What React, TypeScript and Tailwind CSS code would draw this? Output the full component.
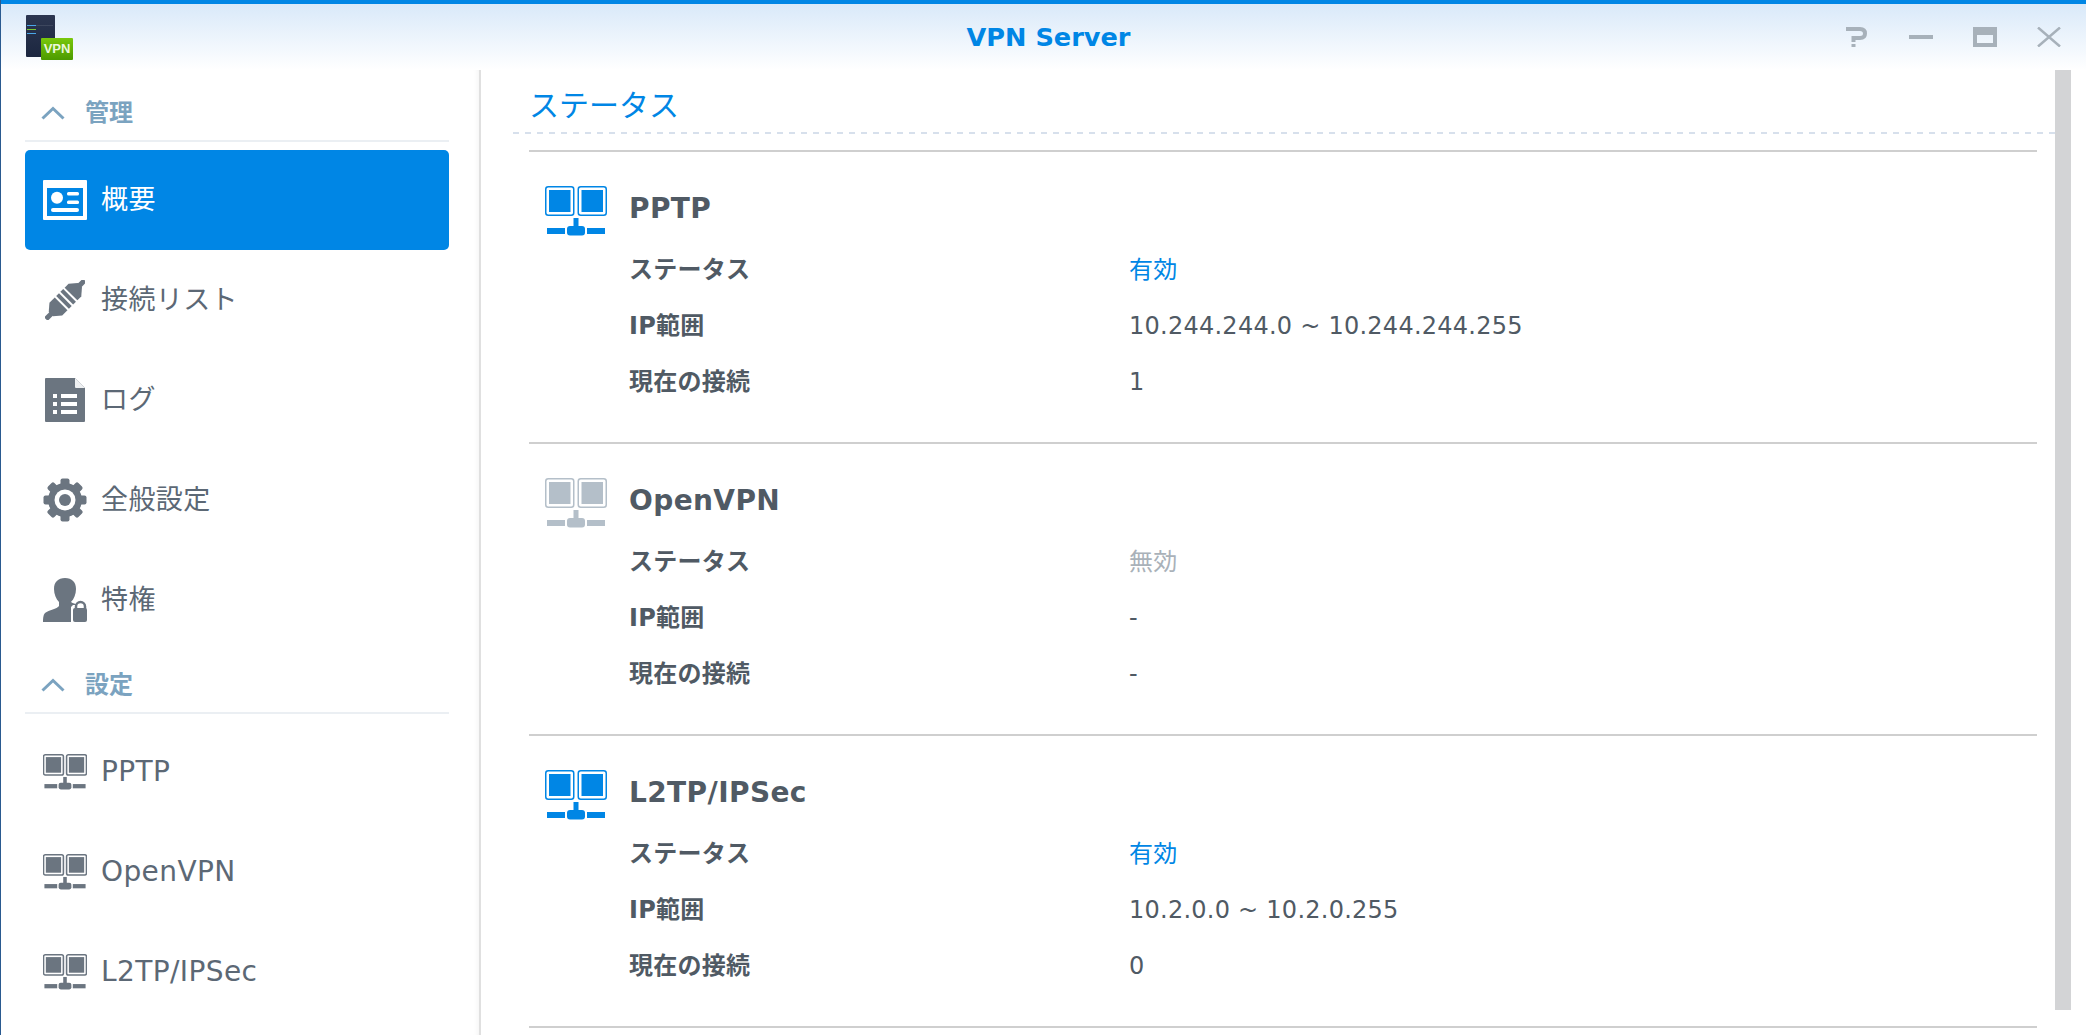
const FONT = "font-['DejaVu_Sans','Noto_Sans_CJK_JP',sans-serif]";

const NetworkIcon = ({
  color,
  className,
  stroke = 1.5,
}: {
  color: string;
  className: string;
  stroke?: number;
}) => (
  <svg viewBox="0 0 62 50" className={className}>
    <rect x="0.75" y="0.75" width="28" height="28.5" rx="2.5" fill="none" stroke={color} strokeWidth={stroke} />
    <rect x="33.25" y="0.75" width="28" height="28.5" rx="2.5" fill="none" stroke={color} strokeWidth={stroke} />
    <rect x="4" y="4" width="21.5" height="22" fill={color} />
    <rect x="36.5" y="4" width="21.5" height="22" fill={color} />
    <rect x="28.5" y="32" width="5" height="10" fill={color} />
    <rect x="22" y="40" width="18" height="9.5" rx="3" fill={color} />
    <rect x="2" y="42" width="18" height="6" fill={color} />
    <rect x="42" y="42" width="18" height="6" fill={color} />
  </svg>
);

const OverviewIcon = () => (
  <svg viewBox="0 0 44 40" className="w-[44px] h-[40px]">
    <path fillRule="evenodd" fill="#fff" d="M1 0H43a1 1 0 0 1 1 1V39a1 1 0 0 1-1 1H1a1 1 0 0 1-1-1V1a1 1 0 0 1 1-1ZM4 8V36H40V8Z" />
    <circle cx="14" cy="17.7" r="6" fill="#fff" />
    <rect x="24" y="12" width="12" height="3.5" rx="1.5" fill="#fff" />
    <rect x="24" y="20.5" width="12" height="3.5" rx="1.5" fill="#fff" />
    <rect x="8" y="28" width="28" height="4" rx="2" fill="#fff" />
  </svg>
);

const PlugIcon = () => (
  <svg viewBox="0 0 40 40" className="w-[40px] h-[40px]">
    <g transform="translate(20 20) rotate(45)" fill="#6b7580">
      <rect x="-2.5" y="-28" width="5" height="8" />
      <path d="M-3-21H3L9-14V-8.5H-9V-14Z" />
      <rect x="-9" y="-6.5" width="18" height="4" />
      <rect x="-9" y="-0.5" width="18" height="4" />
      <path d="M-9 5.5H9V13L3 20H-3L-9 13Z" />
      <rect x="-2.5" y="19" width="5" height="8" />
    </g>
  </svg>
);

const LogIcon = () => (
  <svg viewBox="0 0 40 44" className="w-[40px] h-[44px]">
    <path d="M1 0H30L40 10V43a1 1 0 0 1-1 1H1a1 1 0 0 1-1-1V1a1 1 0 0 1 1-1Z" fill="#6b7580" />
    <path d="M30 0L40 10H31a1 1 0 0 1-1-1Z" fill="#eef0f2" />
    {[16, 24, 32].map((y) => (
      <g key={y} fill="#fff">
        <rect x="8" y={y} width="4" height="4" />
        <rect x="16" y={y} width="16" height="4" />
      </g>
    ))}
  </svg>
);

const GearIcon = () => (
  <svg viewBox="0 0 44 44" className="w-[44px] h-[44px]">
    <g fill="#6b7580">
      <circle cx="22" cy="22" r="17" />
      {[0, 45, 90, 135, 180, 225, 270, 315].map((a) => (
        <rect key={a} x="17.5" y="0.5" width="9" height="9" rx="2" transform={`rotate(${a} 22 22)`} />
      ))}
    </g>
    <circle cx="22" cy="22" r="10.5" fill="#fff" />
    <circle cx="22" cy="22" r="6" fill="#6b7580" />
  </svg>
);

const UserLockIcon = () => (
  <svg viewBox="0 0 44 44" className="w-[44px] h-[44px]">
    <path d="M22 0C15 0 11 4 11 11C11 16 13 21 16 24V28C14 31 6 32 2 35C0 37 0 41 0 44H28V35L33 27C33 25 30 26 28 24C31 21 33 16 33 11C33 4 29 0 22 0Z" fill="#6b7580" />
    <path d="M30 27H44V44H28V29Z" fill="#fff" />
    <path d="M33 31V28.5a4.5 4.5 0 0 1 9 0V31" fill="none" stroke="#6b7580" strokeWidth="2.5" />
    <rect x="30" y="30" width="14" height="14" rx="2" fill="#6b7580" />
  </svg>
);

const Chevron = () => (
  <svg viewBox="0 0 24 14" className="w-[24px] h-[14px]">
    <path d="M1.5 12.5L12 2.5L22.5 12.5" fill="none" stroke="#7ba3c0" strokeWidth="3" />
  </svg>
);

const SectionHeader = ({ label }: { label: string }) => (
  <div className="flex items-center h-[64px] pt-[8px] border-b-2 border-[#ebeff3] pl-[16px] shrink-0">
    <Chevron />
    <span className="ml-[20px] text-[24px] font-bold text-[#7ba3c0]">{label}</span>
  </div>
);

const NavItem = ({
  label,
  icon,
  active = false,
  latin = false,
}: {
  label: string;
  icon: React.ReactNode;
  active?: boolean;
  latin?: boolean;
}) => (
  <div
    className={`flex items-center h-[100px] pl-[18px] rounded-[5px] shrink-0 ${
      active ? "bg-[#0086e5] text-white" : "text-[#5c6875]"
    }`}
  >
    <div className="w-[44px] flex justify-center shrink-0">{icon}</div>
    <span className={`ml-[14px] ${latin ? "text-[28px] tracking-[0.4px]" : "text-[27px] tracking-[0.4px]"}`}>
      {label}
    </span>
  </div>
);

const VpnSection = ({
  name,
  status,
  range,
  connections,
  enabled,
}: {
  name: string;
  status: string;
  range: string;
  connections: string;
  enabled: boolean;
}) => (
  <section className="h-[292px] border-t-2 border-[#cfcfcf] pt-[34px] pl-[16px]">
    <div className="flex items-center h-[50px]">
      <NetworkIcon color={enabled ? "#0086e5" : "#b4bfc9"} className="w-[62px] h-[50px]" />
      <h2 className="ml-[22px] mb-[5px] text-[28px] font-bold tracking-[0.4px] text-[#505a64]">{name}</h2>
    </div>
    <div className="mt-[6px] ml-[84px] grid grid-cols-[500px_1fr] auto-rows-[56px] items-center text-[24px] tracking-[0.25px] text-[#505a64]">
      <span className="font-bold">ステータス</span>
      <span className={enabled ? "text-[#0086e5]" : "text-[#a9b1b9]"}>{status}</span>
      <span className="font-bold">IP範囲</span>
      <span>{range}</span>
      <span className="font-bold">現在の接続</span>
      <span>{connections}</span>
    </div>
  </section>
);

export default function App() {
  return (
    <div className={`h-[1035px] overflow-hidden bg-white border-l border-[#2a5a90] flex flex-col ${FONT}`}>
      <header className="h-[70px] shrink-0 border-t-4 border-[#0086e5] bg-gradient-to-b from-[#d9e9f9] to-white grid grid-cols-[1fr_auto_1fr] items-center">
        <div className="pl-[25px]">
          <div className="relative w-[48px] h-[45px]">
            <div className="absolute left-0 top-0 w-[29px] h-[42px] rounded-[1px] bg-gradient-to-b from-[#2c3650] to-[#1c2740] pt-[10px] pl-[1px]">
              <div className="w-[26px] h-[1px] mb-[-1px] bg-[#3d475e]" />
              <div className="w-[9px] h-[1px] bg-[#4aa8e8]" />
              <div className="w-[9px] h-[1px] mt-[3px] bg-[#78c832]" />
              <div className="w-[9px] h-[1px] mt-[3px] bg-[#4aa8e8]" />
            </div>
            <div className="absolute left-[15px] top-[23px] w-[32px] h-[22px] bg-gradient-to-b from-[#79c80c] to-[#4c9a00] text-[#eaf7dc] text-[13px] font-['Liberation_Sans'] font-bold flex items-center justify-center rounded-[1px]">
              VPN
            </div>
          </div>
        </div>
        <h1 className="pl-[10px] text-[25.6px] font-bold text-[#0086e5]">VPN Server</h1>
        <div className="flex justify-end items-center gap-[40px] pr-[25px]">
          <svg viewBox="0 0 24 20" className="w-[24px] h-[20px]">
            <path d="M1 2H15Q20 2 20 6.5Q20 11 15 11H8.5V15" fill="none" stroke="#a7b1ba" strokeWidth="4" />
            <rect x="6.5" y="17" width="4" height="3" fill="#a7b1ba" />
          </svg>
          <svg viewBox="0 0 24 20" className="w-[24px] h-[20px]">
            <rect y="8" width="24" height="4" fill="#a7b1ba" />
          </svg>
          <svg viewBox="0 0 24 20" className="w-[24px] h-[20px]">
            <path fillRule="evenodd" d="M0 0H24V20H0ZM4 8V16H20V8Z" fill="#a7b1ba" />
          </svg>
          <svg viewBox="0 0 24 20" className="w-[24px] h-[20px]">
            <path d="M1 0.5L23 19.5M23 0.5L1 19.5" fill="none" stroke="#a7b1ba" strokeWidth="2.5" />
          </svg>
        </div>
      </header>

      <div className="flex flex-1 min-h-0">
        <aside className="w-[480px] shrink-0 border-r-2 border-[#e0e0e0] pl-[24px] pr-[30px] pt-[8px] flex flex-col shadow-[inset_-6px_0_6px_-6px_#eeeeee]">
          <SectionHeader label="管理" />
          <div className="mt-[8px] flex flex-col">
            <NavItem label="概要" icon={<OverviewIcon />} active />
            <NavItem label="接続リスト" icon={<PlugIcon />} />
            <NavItem label="ログ" icon={<LogIcon />} />
            <NavItem label="全般設定" icon={<GearIcon />} />
            <NavItem label="特権" icon={<UserLockIcon />} />
          </div>
          <SectionHeader label="設定" />
          <div className="mt-[8px] flex flex-col">
            <NavItem latin label="PPTP" icon={<NetworkIcon color="#6b7580" stroke={2.2} className="w-[44px] h-[38px]" />} />
            <NavItem latin label="OpenVPN" icon={<NetworkIcon color="#6b7580" stroke={2.2} className="w-[44px] h-[38px]" />} />
            <NavItem latin label="L2TP/IPSec" icon={<NetworkIcon color="#6b7580" stroke={2.2} className="w-[44px] h-[38px]" />} />
          </div>
        </aside>

        <main className="flex-1 min-w-0 flex pl-[32px] pr-[15px]">
          <div className="flex-1 min-w-0">
            <div className="h-[62px] pt-[8px] pl-[16px] flex items-center">
              <span className="text-[30px] text-[#0086e5]">ステータス</span>
            </div>
            <div className="h-[2px] bg-[repeating-linear-gradient(to_right,#d7e0ec_0,#d7e0ec_6px,transparent_6px,transparent_12px)]" />
            <div className="mt-[16px] ml-[16px] mr-[18px]">
              <VpnSection name="PPTP" status="有効" range="10.244.244.0 ~ 10.244.244.255" connections="1" enabled />
              <VpnSection name="OpenVPN" status="無効" range="-" connections="-" enabled={false} />
              <VpnSection name="L2TP/IPSec" status="有効" range="10.2.0.0 ~ 10.2.0.255" connections="0" enabled />
              <div className="border-t-2 border-[#cfcfcf]" />
            </div>
          </div>
          <div className="w-[16px] h-[940px] bg-[#d3d4d6] shrink-0" />
        </main>
      </div>
    </div>
  );
}
